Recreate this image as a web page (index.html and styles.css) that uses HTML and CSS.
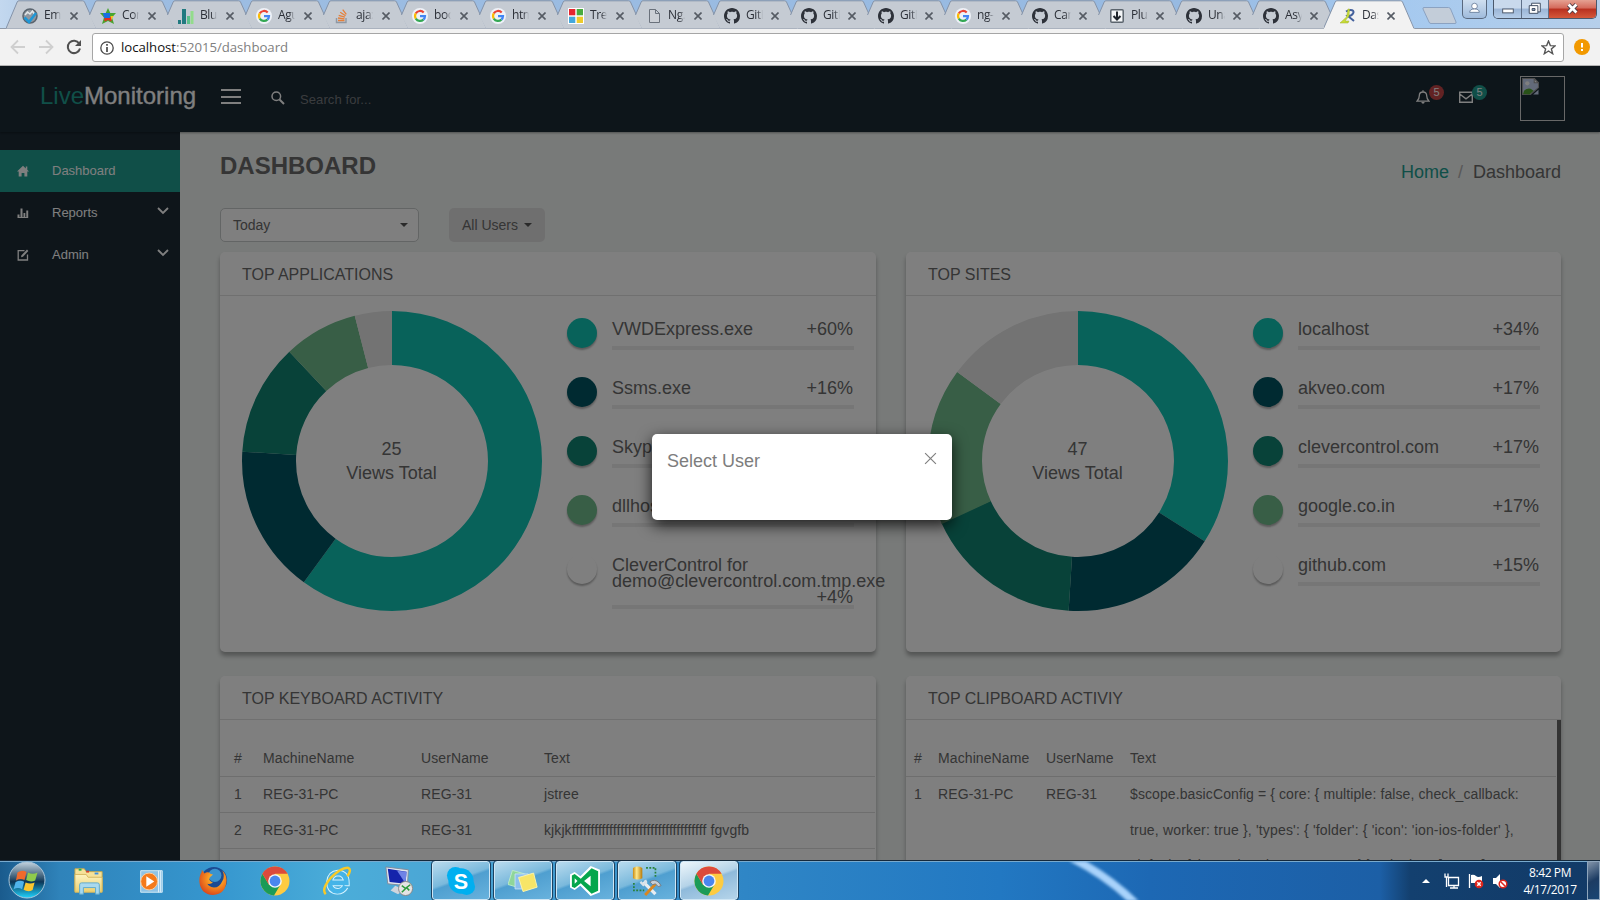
FILE: index.html
```html
<!DOCTYPE html>
<html lang="en">
<head>
<meta charset="utf-8">
<title>Dashboard</title>
<link rel="stylesheet" href="styles.css">
</head>
<body>
<svg class="defs" width="0" height="0">
  <defs>
    <linearGradient id="gOrb" x1="0" y1="0" x2="0" y2="1"><stop offset="0" stop-color="#c3d3df"/><stop offset=".45" stop-color="#31546f"/><stop offset=".55" stop-color="#0c3556"/><stop offset="1" stop-color="#1fd4ff"/></linearGradient>
    <linearGradient id="gFold" x1="0" y1="0" x2="0" y2="1"><stop offset="0" stop-color="#fdf3c0"/><stop offset="1" stop-color="#ecd06f"/></linearGradient>
    <radialGradient id="gFox" cx=".6" cy=".35" r=".7"><stop offset="0" stop-color="#ffd93a"/><stop offset=".5" stop-color="#f58a1f"/><stop offset="1" stop-color="#d8431b"/></radialGradient>
    <linearGradient id="gDb" x1="0" x2="1" y1="0" y2="0"><stop offset="0" stop-color="#c98a10"/><stop offset=".4" stop-color="#ffe88a"/><stop offset="1" stop-color="#b87a08"/></linearGradient>
    <symbol id="tab" viewBox="0 0 92 29"><path d="M5.5 15.500 11.200 2Q11.600.8 13 .8H76.500Q78 .8 78.500 2L90.500 28.500H12z" fill="#c5cbd3"/><path d="M5.500 15 11.200 2Q11.600.8 13 .8H76.500Q78 .8 78.500 2L90.500 28.500" fill="none" stroke="#8493a9"/></symbol>
    <symbol id="tab-first" viewBox="0 0 92 29"><path d="M0 28.500 11.200 2Q11.600.8 13 .8H76.500Q78 .8 78.500 2L90.500 28.500z" fill="#c5cbd3"/><path d="M0 28.500 11.200 2Q11.600.8 13 .8H76.500Q78 .8 78.500 2L90.500 28.500" fill="none" stroke="#8493a9"/></symbol>
    <symbol id="tab-on" viewBox="0 0 92 29"><path d="M-.5 29 11.200 2Q11.600.8 13 .8H76.500Q78 .8 78.500 2L90.500 29z" fill="#f2f2f2"/><path d="M-.5 28.500 11.200 2Q11.600.8 13 .8H76.500Q78 .8 78.500 2L90 28.500" fill="none" stroke="#8493a9"/></symbol>
    <symbol id="x" viewBox="0 0 8 8"><path d="M.5.5l7 7M7.500.5l-7 7" stroke="#555b64" stroke-width="1.600" fill="none"/></symbol>
    <symbol id="google" viewBox="0 0 16 16"><circle cx="8" cy="8" r="8" fill="#eef2f8"/><g fill="none" stroke-width="2.200"><path d="M3.800 5.400A5 5 0 0 1 11.700 4.500" stroke="#ea4335"/><path d="M3.800 5.400A5 5 0 0 0 3.800 10.600" stroke="#fbbc05"/><path d="M3.800 10.600A5 5 0 0 0 11.400 11.600" stroke="#34a853"/><path d="M8 8.100H13A5 5 0 0 1 11.400 11.600" stroke="#4285f4"/></g></symbol>
    <symbol id="github" viewBox="0 0 16 16"><path fill="#2d3139" d="M8 0C3.580 0 0 3.580 0 8c0 3.540 2.290 6.530 5.470 7.590.4.070.55-.17.55-.38 0-.19-.01-.82-.01-1.490-2.010.37-2.530-.49-2.690-.94-.09-.23-.48-.94-.82-1.130-.28-.15-.68-.52-.01-.53.63-.01 1.080.58 1.230.82.72 1.210 1.870.87 2.330.66.07-.52.28-.87.51-1.070-1.780-.2-3.640-.89-3.640-3.950 0-.87.31-1.590.82-2.150-.08-.2-.36-1.020.08-2.120 0 0 .67-.21 2.200.82.64-.18 1.320-.27 2-.27s1.360.09 2 .27c1.530-1.040 2.200-.82 2.200-.82.44 1.100.16 1.920.08 2.120.51.56.82 1.270.82 2.150 0 3.070-1.870 3.750-3.650 3.950.29.25.54.73.54 1.480 0 1.070-.01 1.930-.01 2.200 0 .21.15.46.55.38A8.010 8.010 0 0 0 16 8c0-4.420-3.580-8-8-8z"/></symbol>
    <symbol id="chrome" viewBox="0 0 30 30"><circle cx="15" cy="15" r="14.500" fill="#fdcb41"/><path d="M2.400 7.800A14.500 14.500 0 0 0 14 29.500L20.500 18.500 9 18.800z" fill="#1b9b57"/><path d="M2.400 7.800A14.500 14.500 0 0 1 27.600 7.800H15L8.800 18.400z" fill="#dc4a3c"/><circle cx="15" cy="15" r="6.800" fill="#f4f6f8"/><circle cx="15" cy="15" r="5.400" fill="#4a86ee"/></symbol>
    <symbol id="chev" viewBox="0 0 12 8"><path d="M1 1l5 5 5-5" fill="none" stroke="#fff" stroke-width="1.800"/></symbol>
  </defs>
</svg>

<div class="screen">
  <div class="titlebar">
    <div class="tabs">
      <div class="tab"><svg class="shape"><use href="#tab-first"/></svg><svg class="fav" viewBox="0 0 16 16"><circle cx="8" cy="8" r="7" fill="#8f969e" stroke="#59636d" stroke-width="1.500"/><path d="M3 7l2.500-3L8 6l2.500-3 2.500 4" fill="none" stroke="#e4e7e9" stroke-width="1.500"/><path d="M2.500 9.500l4.500 4.500 7-9" fill="none" stroke="#1f97d6" stroke-width="2.600"/></svg><span>Emp</span><svg class="close"><use href="#x"/></svg></div>
      <div class="tab"><svg class="shape"><use href="#tab"/></svg><svg class="fav" viewBox="0 0 16 16"><path d="M8 0l2.300 5H16l-4 4.500L14 16l-6-3-6 3 2-6.500L0 5h5.700z" fill="#48a52f"/><path d="M4.500 9h7v4.500L8 12l-3.500 1.500z" fill="#e62b1e"/><path d="M3 5h7v5H4z" fill="#1a6fe0"/><path d="M10.500 8h3l-2 4z" fill="#f9c21a"/></svg><span>Con</span><svg class="close"><use href="#x"/></svg></div>
      <div class="tab"><svg class="shape"><use href="#tab"/></svg><svg class="fav" viewBox="0 0 16 16"><path d="M0 12h3v4H0zM4 1h4v15H4z" fill="#217a80"/><path d="M9 8h3v8H9z" fill="#5cc08c"/><path d="M12.500 3h3v13h-3z" fill="#93dc8c"/></svg><span>Blur</span><svg class="close"><use href="#x"/></svg></div>
      <div class="tab"><svg class="shape"><use href="#tab"/></svg><svg class="fav"><use href="#google"/></svg><span>Agu</span><svg class="close"><use href="#x"/></svg></div>
      <div class="tab"><svg class="shape"><use href="#tab"/></svg><svg class="fav" viewBox="0 0 16 16"><path d="M2.500 10v4.500h9.500V10" fill="none" stroke="#8f98a3" stroke-width="1.400"/><path d="M4 12.500h6.500M4 10l6.500.8M4.700 7.300l6.200 1.900M6.200 4.300l5.400 3.400M8.700 1.700l3.600 4.700" stroke="#e5803a" stroke-width="1.300"/></svg><span>ajax</span><svg class="close"><use href="#x"/></svg></div>
      <div class="tab"><svg class="shape"><use href="#tab"/></svg><svg class="fav"><use href="#google"/></svg><span>boo</span><svg class="close"><use href="#x"/></svg></div>
      <div class="tab"><svg class="shape"><use href="#tab"/></svg><svg class="fav"><use href="#google"/></svg><span>htm</span><svg class="close"><use href="#x"/></svg></div>
      <div class="tab"><svg class="shape"><use href="#tab"/></svg><svg class="fav" viewBox="0 0 16 16"><path d="M0 0h16v16H0z" fill="#fff"/><path d="M1 1h6.300v6.300H1z" fill="#e5262f"/><path d="M8.700 1H15v6.300H8.700z" fill="#49ab3d"/><path d="M1 8.700h6.300V15H1z" fill="#44a8dc"/><path d="M8.700 8.700H15V15H8.700z" fill="#eecb2b"/></svg><span>Tree</span><svg class="close"><use href="#x"/></svg></div>
      <div class="tab"><svg class="shape"><use href="#tab"/></svg><svg class="fav" viewBox="0 0 16 16"><path d="M3.500 1.500h6l4 4v9h-10zM9.500 1.500v4h4" fill="#ccd0d6" stroke="#6a717b"/></svg><span>Ng.</span><svg class="close"><use href="#x"/></svg></div>
      <div class="tab n"><svg class="shape"><use href="#tab"/></svg><svg class="fav"><use href="#github"/></svg><span>GitH</span><svg class="close"><use href="#x"/></svg></div>
      <div class="tab n"><svg class="shape"><use href="#tab"/></svg><svg class="fav"><use href="#github"/></svg><span>GitH</span><svg class="close"><use href="#x"/></svg></div>
      <div class="tab n"><svg class="shape"><use href="#tab"/></svg><svg class="fav"><use href="#github"/></svg><span>GitH</span><svg class="close"><use href="#x"/></svg></div>
      <div class="tab n"><svg class="shape"><use href="#tab"/></svg><svg class="fav"><use href="#google"/></svg><span>ng-</span><svg class="close"><use href="#x"/></svg></div>
      <div class="tab n"><svg class="shape"><use href="#tab"/></svg><svg class="fav"><use href="#github"/></svg><span>Can</span><svg class="close"><use href="#x"/></svg></div>
      <div class="tab n"><svg class="shape"><use href="#tab"/></svg><svg class="fav" viewBox="0 0 16 16"><rect x="1.800" y="1.800" width="12.400" height="12.400" rx="1" fill="#f3f5f7" stroke="#5b646d" stroke-width="1.500"/><path d="M8 3.500v8M4.500 8 8 11.500 11.500 8" fill="none" stroke="#1e242b" stroke-width="2"/></svg><span>Plun</span><svg class="close"><use href="#x"/></svg></div>
      <div class="tab n"><svg class="shape"><use href="#tab"/></svg><svg class="fav"><use href="#github"/></svg><span>Una</span><svg class="close"><use href="#x"/></svg></div>
      <div class="tab n"><svg class="shape"><use href="#tab"/></svg><svg class="fav"><use href="#github"/></svg><span>Asy</span><svg class="close"><use href="#x"/></svg></div>
      <div class="tab n"><svg class="shape"><use href="#tab-on"/></svg><svg class="fav" viewBox="0 0 16 16"><path d="M6 3.500c5-3 9-1 7 2-1 2-3 2.500-5 2.500l6 5" fill="none" stroke="#44619c" stroke-width="2"/><path d="M8 1 6.500 9 0 15h8l1-2H5l4-5 .5-7z" fill="#c9dc38" stroke="#9fb32a" stroke-width=".5"/></svg><span>Das</span><svg class="close"><use href="#x"/></svg></div>
    </div>
    <svg class="newtab" viewBox="0 0 36 18"><path d="M2 .5H26.500Q28 .5 28.600 2L34 15Q34.500 16.500 33 16.500H9Q7.500 16.500 7 15L1 2Q.5.500 2 .5z" fill="#c3cdd9" stroke="#8ba2c1"/></svg>
    <div class="winbtns">
      <svg class="user" viewBox="0 0 24 18"><circle cx="12" cy="6" r="3" fill="#fff" stroke="#596f8e" stroke-width=".8"/><path d="M7 12.500q0-3.500 5-3.500t5 3.500z" fill="#fff" stroke="#596f8e" stroke-width=".8"/></svg>
      <div class="group">
        <svg class="min" viewBox="0 0 28 18"><rect x="9" y="9" width="11" height="4" fill="#fff" stroke="#4b5668"/></svg>
        <svg class="max" viewBox="0 0 27 18"><path d="M10 3h9v9h-9z" fill="#fff" stroke="#3e4c61"/><path d="M7.500 5.500h9v8h-9z" fill="#fff" stroke="#3e4c61"/><path d="M10.500 8.500h3v2h-3z" fill="#8fa4c3" stroke="#3e4c61"/></svg>
        <svg class="cls" viewBox="0 0 48 18"><path d="M20 4.500l8 8M28 4.500l-8 8" stroke="#4b3a44" stroke-width="4.500"/><path d="M20 4.500l8 8M28 4.500l-8 8" stroke="#fff" stroke-width="2.800"/></svg>
      </div>
    </div>
  </div>
  <div class="toolbar">
    <svg class="nav back" viewBox="0 0 16 16"><path d="M15 8H2M8 1.500 1.500 8 8 14.500" fill="none" stroke="#cfcfcf" stroke-width="1.800"/></svg>
    <svg class="nav" viewBox="0 0 16 16"><path d="M1 8h13M8 1.500 14.500 8 8 14.500" fill="none" stroke="#cfcfcf" stroke-width="1.800"/></svg>
    <svg class="nav reload" viewBox="0 0 16 16"><path d="M13.200 4.500A6.200 6.200 0 1 0 14 9.500" fill="none" stroke="#505050" stroke-width="2"/><path d="M15 1v6H9z" fill="#505050"/></svg>
    <div class="omni">
      <svg class="info" viewBox="0 0 14 14"><circle cx="7" cy="7" r="6.200" fill="none" stroke="#4a4a4a" stroke-width="1.300"/><path d="M7 3v1.700M7 6v5" stroke="#4a4a4a" stroke-width="1.700"/></svg>
      <div class="url"><b>localhost</b>:52015/dashboard</div>
      <svg class="star" viewBox="0 0 14 14"><path d="M7 1l1.700 4.200 4.500.3-3.500 2.900 1.200 4.400L7 10.300l-3.900 2.500 1.200-4.400L.8 5.500l4.500-.3z" fill="none" stroke="#555" stroke-width="1.300"/></svg>
    </div>
    <svg class="warn" viewBox="0 0 16 16"><circle cx="8" cy="8" r="8" fill="#f29900"/><path d="M8 4v4.500M8 10v2" stroke="#fff" stroke-width="2"/></svg>
  </div>

  <div class="page">
    <header class="top">
      <div class="logo"><span>Live</span>Monitoring</div>
      <div class="burger"><i></i><i></i><i></i></div>
      <svg class="search" viewBox="0 0 14 14"><circle cx="5.300" cy="5.300" r="4.300" fill="none" stroke="#fff" stroke-width="1.500"/><path d="M8.500 8.500l4.500 4.500" stroke="#fff" stroke-width="1.900"/></svg>
      <div class="ph">Search for...</div>
      <div class="alerts">
        <div class="alert"><svg viewBox="0 0 14 14"><path d="M1 11.200h12Q10.700 9 10.700 5.800 10.700 2 7 2T3.300 5.800Q3.300 9 1 11.200zM7 .3V2" fill="none" stroke="#fff" stroke-width="1.300"/><path d="M5.300 12h3.400Q8.400 13.700 7 13.700T5.300 12z" fill="#fff"/></svg><em class="red">5</em></div>
        <div class="alert"><svg viewBox="0 0 14 14"><path d="M.7 2.200h12.600v10H.7zM.7 4l6.300 4.800L13.300 4" fill="none" stroke="#fff" stroke-width="1.400"/></svg><em class="teal">5</em></div>
      </div>
      <div class="avatar"><svg viewBox="0 0 16 16"><path d="M.5.500h11l4 4V9L8 15.500H.5z" fill="#c6d5f2" stroke="#9a9a9a"/><path d="M1 15q1-6 7-5l3 2-4 3.500z" fill="#53a431"/><circle cx="5" cy="5" r="2" fill="#fff"/><path d="M11.500.5v4h4z" fill="#fff" stroke="#999"/><path d="M15.500 11v4.500h-5z" fill="#c6d5f2"/></svg></div>
    </header>
    <div class="body">
      <aside>
        <a class="on"><svg class="ico" viewBox="0 0 12 12"><path d="M6 .8 0 6.500h1.700V11.500H4.600V8h2.800v3.500h2.900V6.500H12L10.300 4.800V1.500H8.800v1.900z" fill="#fff"/></svg><span>Dashboard</span></a>
        <a><svg class="ico" viewBox="0 0 12 12"><path d="M.5 7.500h2v3h-2zM3.500 1.500h2v9h-2zM6.500 6h1.800v4.500H6.500zM9.300 3.500h1.900v7H9.300zM.5 10h10.700v1H.5z" fill="#fff"/></svg><span>Reports</span><svg class="chev"><use href="#chev"/></svg></a>
        <a><svg class="ico" viewBox="0 0 12 12"><path d="M7.500 1.700H1.200v9.300h9.300V5.500" fill="none" stroke="#fff" stroke-width="1.300"/><path d="M4 8.300l.5-2L10 .6l1.400 1.400L6 7.700z" fill="#fff"/></svg><span>Admin</span><svg class="chev"><use href="#chev"/></svg></a>
      </aside>
      <main>
        <div class="headrow"><h1>DASHBOARD</h1><div class="crumb"><a>Home</a><i>/</i><span>Dashboard</span></div></div>
        <div class="filters"><div class="select">Today<b class="caret"></b></div><div class="btn">All Users<b class="caret"></b></div></div>
        <div class="cards">
          <section class="card tall">
            <h2>TOP APPLICATIONS</h2>
            <div class="chart">
              <div class="donut">
                <svg viewBox="0 0 300 300"><g fill="none" stroke-width="54" transform="rotate(-90 150 150)">
                  <circle cx="150" cy="150" r="123" pathLength="100" stroke="#10c4b5" stroke-dasharray="60 40"/>
                  <circle cx="150" cy="150" r="123" pathLength="100" stroke="#005562" stroke-dasharray="16 84" stroke-dashoffset="-60"/>
                  <circle cx="150" cy="150" r="123" pathLength="100" stroke="#108473" stroke-dasharray="12 88" stroke-dashoffset="-76"/>
                  <circle cx="150" cy="150" r="123" pathLength="100" stroke="#70bc8c" stroke-dasharray="8 92" stroke-dashoffset="-88"/>
                  <circle cx="150" cy="150" r="123" pathLength="100" stroke="#e6e6e6" stroke-dasharray="4 96" stroke-dashoffset="-96"/>
                </g></svg>
                <div class="total">25<br>Views Total</div>
              </div>
              <ul>
                <li><i class="c1"></i><div><p><span>VWDExpress.exe</span><b>+60%</b></p></div></li>
                <li><i class="c2"></i><div><p><span>Ssms.exe</span><b>+16%</b></p></div></li>
                <li><i class="c3"></i><div><p><span>Skype.exe</span><b>+12%</b></p></div></li>
                <li><i class="c4"></i><div><p><span>dllhost.exe</span><b>+8%</b></p></div></li>
                <li><i class="c5"></i><div><p><span class="long">CleverControl for demo@clevercontrol.com.tmp.exe</span><b>+4%</b></p></div></li>
              </ul>
            </div>
          </section>
          <section class="card tall">
            <h2>TOP SITES</h2>
            <div class="chart">
              <div class="donut">
                <svg viewBox="0 0 300 300"><g fill="none" stroke-width="54" transform="rotate(-90 150 150)">
                  <circle cx="150" cy="150" r="123" pathLength="100" stroke="#10c4b5" stroke-dasharray="34 66"/>
                  <circle cx="150" cy="150" r="123" pathLength="100" stroke="#005562" stroke-dasharray="17 83" stroke-dashoffset="-34"/>
                  <circle cx="150" cy="150" r="123" pathLength="100" stroke="#108473" stroke-dasharray="17.200 82.800" stroke-dashoffset="-51"/>
                  <circle cx="150" cy="150" r="123" pathLength="100" stroke="#70bc8c" stroke-dasharray="17 83" stroke-dashoffset="-68.100"/>
                  <circle cx="150" cy="150" r="123" pathLength="100" stroke="#e6e6e6" stroke-dasharray="14.900 85.100" stroke-dashoffset="-85.100"/>
                </g></svg>
                <div class="total">47<br>Views Total</div>
              </div>
              <ul>
                <li><i class="c1"></i><div><p><span>localhost</span><b>+34%</b></p></div></li>
                <li><i class="c2"></i><div><p><span>akveo.com</span><b>+17%</b></p></div></li>
                <li><i class="c3"></i><div><p><span>clevercontrol.com</span><b>+17%</b></p></div></li>
                <li><i class="c4"></i><div><p><span>google.co.in</span><b>+17%</b></p></div></li>
                <li><i class="c5"></i><div><p><span>github.com</span><b>+15%</b></p></div></li>
              </ul>
            </div>
          </section>
          <section class="card">
            <h2>TOP KEYBOARD ACTIVITY</h2>
            <div class="grid keys">
              <div class="row hd"><span>#</span><span>MachineName</span><span>UserName</span><span>Text</span></div>
              <div class="row"><span>1</span><span>REG-31-PC</span><span>REG-31</span><span>jstree</span></div>
              <div class="row"><span>2</span><span>REG-31-PC</span><span>REG-31</span><span>kjkjkffffffffffffffffffffffffffffffffffff fgvgfb</span></div>
            </div>
          </section>
          <section class="card">
            <h2>TOP CLIPBOARD ACTIVIY</h2>
            <div class="grid clips">
              <div class="row hd"><span>#</span><span>MachineName</span><span>UserName</span><span>Text</span></div>
              <div class="row last"><span>1</span><span>REG-31-PC</span><span>REG-31</span><span class="code">$scope.basicConfig = { core: { multiple: false, check_callback:<br><span class="wide">true, worker: true }, 'types': { 'folder': { 'icon': 'ion-ios-folder' },</span><br>'default': { 'icon': 'ion-document-text' } }, 'plugins': ['types'],</span></div>
            </div>
          </section>
        </div>
      </main>
    </div>
    <div class="overlay"></div>
    <div class="modal"><span>Select User</span><svg viewBox="0 0 12 12"><path d="M1 1l10 10M11 1 1 11" stroke="#808080" stroke-width="1.100"/></svg></div>
  </div>

  <div class="taskbar">
    <svg class="beam" viewBox="0 0 100 40"><path d="M5 -4Q45 16 74 46" fill="none" stroke="#a9d3fb" stroke-width="8"/></svg>
    <svg class="orb" viewBox="0 0 38 38"><circle cx="19" cy="19" r="18" fill="url(#gOrb)" stroke="#a8c4d8"/><path d="M9.500 11.500q4.500-3 9-.5l-2 8q-4.500-2-8.500.5z" fill="#ef6a2c"/><path d="M20 11.500q4.500 2.500 9.500 0l-2.300 8q-4.500 2-9-.5z" fill="#8fcb4c"/><path d="M7.600 21q4.500-2.500 8.500-.3l-2 7.500q-4-2.300-8.500 0z" fill="#4fb4ec"/><path d="M17.600 21.500q4.500 2 9 0l-2 7.500q-4.500 2.500-9-.3z" fill="#fbc62e"/></svg>
    <div class="apps">
      <div class="app"><svg viewBox="0 0 32 32"><path d="M1 7V3h10l2 3h17v21H1z" fill="#f6e29a" stroke="#c9a94a"/><path d="M5 3h3v2H5z" fill="#26b34a"/><path d="M13 5h3v2h-3z" fill="#d8402b"/><path d="M22 7h4v2h-4z" fill="#3a8ee0"/><path d="M1 9h12l2 3h15v16H1z" fill="url(#gFold)" stroke="#d3b65d"/><path d="M6 30V20q0-2 2-2h17q2 0 2 2v10h-4v-7H10v7z" fill="#a9d9ee" stroke="#5ba9cf"/></svg></div>
      <div class="app"><svg viewBox="0 0 32 32"><path d="M5 5h23v23H5z" fill="#8fc3e6" stroke="#d8edf8"/><path d="M24 5v23M26 5v23" stroke="#e3f2fb"/><circle cx="14" cy="16.500" r="9" fill="#f47a1c" stroke="#ffd0a0"/><path d="M11 11v11l8.500-5.500z" fill="#fff"/></svg></div>
      <div class="app"><svg viewBox="0 0 32 32"><circle cx="17" cy="15" r="14" fill="#1c4b92"/><circle cx="18" cy="10" r="7" fill="#3a93cf"/><path d="M4 6Q1 11 1.500 17 3 30 16 31 30 30 30.500 15 30 8 26 5q3 6 0 11-3 7-9 7-6-1-7-4 4 1 6-2-3 0-4-3 0-2 2-3l2-2q-3 0-4-2-3-1-5 1-1-2-3-4z" fill="url(#gFox)"/></svg></div>
      <div class="app"><svg viewBox="0 0 30 30"><use href="#chrome"/></svg></div>
      <div class="app"><svg viewBox="0 0 32 32"><path d="M25 22Q22 27 16.500 27 8 26.500 8 17 9 8 17 7.500 26 8 26 18H9" fill="none" stroke="#d7f3ff" stroke-width="7"/><path d="M25 21.500Q22 27 16.500 27 8 26.500 8 17 9 8 17 7.500 26 8 26 18H9" fill="none" stroke="#45b4e8" stroke-width="5"/><path d="M4 30Q-1 25 9 13 21 1 28 2q4 2-1 9" fill="none" stroke="#f8c927" stroke-width="2.600"/></svg></div>
      <div class="app"><svg viewBox="0 0 32 32"><path d="M2 1l24 3-1 17L4 19z" fill="#dfe5ee" stroke="#7f8b9c"/><path d="M4 3l20 3-1 13L6 17z" fill="#1423ab"/><path d="M14 5l10 1-1 13z" fill="#6f83e6"/><path d="M12 21l-5 5 8 4 6-5z" fill="#cfd5dd"/><circle cx="23" cy="24" r="7.500" fill="#e4e4e4" stroke="#858585"/><path d="M19 21l4 3-4 4M28 20l-4 3 3 3" fill="none" stroke="#2c9b3c" stroke-width="1.600"/></svg></div>
      <div class="app run"><svg viewBox="0 0 32 32"><rect x="1" y="1" width="18" height="18" rx="9" fill="#00aff0"/><rect x="13" y="13" width="18" height="18" rx="9" fill="#00aff0"/><circle cx="16" cy="16" r="13.500" fill="#00aff0"/><text x="16" y="24" text-anchor="middle" class="sk">S</text></svg></div>
      <div class="app run"><svg viewBox="0 0 34 32"><path d="M5 4l14 4-5 16-14-4z" fill="#8fd69a" stroke="#c2efc6"/><path d="M8 8h15v17H8z" fill="#8cc0ee" stroke="#c7e1f7"/><path d="M12 12l17-5 4 16-16 5z" fill="#f7e568" stroke="#fff6ae"/></svg></div>
      <div class="app run"><svg viewBox="0 0 32 32"><path d="M0 9l5-2.500 6 4.500L22 0l10 4v24l-10 4-11-11-6 4.500L0 23z" fill="#fff"/><path d="M2 10l3-1.500 6.500 5L23 2.500l7 3v21l-7 3-11.500-11-6.500 5L2 22zM5 13v6l3-3zM22 10.500 15 16l7 5.500z" fill="#05a64c" fill-rule="evenodd"/></svg></div>
      <div class="app run"><svg viewBox="0 0 32 32"><path d="M1 2q5-3 10 0v11q-5 3-10 0z" fill="url(#gDb)"/><path d="M15 2h10v10M2 18v8h11" fill="none" stroke="#29813a" stroke-width="1.800" stroke-dasharray="2 1.500"/><path d="M12 17l13 13" stroke="#e8edf2" stroke-width="3.500"/><path d="M27 17 14 31" stroke="#d98720" stroke-width="3"/><path d="M19 17q5-4 10 1l2 3-3 1-3-3-3 1z" fill="#c5ced6" stroke="#707a83"/><path d="M9 17l3 3 3-3-1-2" fill="none" stroke="#dbe2e9" stroke-width="2.500"/></svg></div>
      <div class="app run act"><svg viewBox="0 0 30 30"><use href="#chrome"/></svg></div>
    </div>
    <div class="tray">
      <svg class="up" viewBox="0 0 8 4"><path d="M0 4 4 0l4 4z" fill="#fff"/></svg>
      <svg class="ti" viewBox="0 0 16 16"><path d="M4.500 4.500h10v8h-10zM6 15h8M10 12.500V15M1 .5v3.500h3V.5M2.500 4v10" fill="none" stroke="#fff" stroke-width="1.300"/></svg>
      <svg class="ti" viewBox="0 0 16 16"><path d="M1.500 1v14" stroke="#fff" stroke-width="1.300"/><path d="M3 2q3-1 5 1t6 0v7H3z" fill="#fff"/><circle cx="11" cy="11" r="4.300" fill="#e0251b"/><path d="M9.300 9.300l3.400 3.400M12.700 9.300l-3.400 3.400" stroke="#fff" stroke-width="1.500"/></svg>
      <svg class="ti" viewBox="0 0 16 16"><path d="M1 5h3l4-4v14l-4-4H1z" fill="#fff"/><circle cx="11" cy="11" r="3.800" fill="#fff" stroke="#e0251b" stroke-width="1.500"/><path d="M8.500 8.500l5 5" stroke="#e0251b" stroke-width="1.500"/></svg>
      <div class="clock">8:42 PM<br>4/17/2017</div>
      <div class="peek"></div>
    </div>
  </div>
</div>
</body>
</html>
```
FILE: styles.css
```css
* { box-sizing: border-box; margin: 0; padding: 0; }
body { width: 1600px; height: 900px; overflow: hidden; font-family: "Liberation Sans", Arial, sans-serif; }
svg { display: block; flex: none; }
.defs { position: absolute; }
.screen { width: 1600px; height: 900px; display: flex; flex-direction: column; overflow: hidden; }

/* Browser window */
.titlebar { height: 29px; flex: none; display: flex; align-items: flex-start; background: linear-gradient(90deg, #c3d8ef 0, #9dbde2 90px, #97bae2 1180px, #a5c9ef 1400px, #b6cfea 1600px); border-bottom: 1px solid #8f99a8; }
.tabs { display: flex; padding-left: 6px; }
.tab { position: relative; width: 78px; height: 29px; display: flex; align-items: center; padding: 0 0 0 16px; }
.tab.n { width: 77px; }
.shape { position: absolute; left: 0; top: 0; width: 92px; height: 29px; overflow: visible; }
.shape use { width: 92px; height: 29px; }
.fav { width: 16px; height: 16px; position: relative; top: 1px; }
.tab span { position: relative; margin-left: 6px; width: 17px; overflow: hidden; white-space: nowrap; font: 12px/18px "Open Sans", "Noto Sans", sans-serif; letter-spacing: -.4px; color: #2c3038; -webkit-mask-image: linear-gradient(90deg, #000 65%, transparent); mask-image: linear-gradient(90deg, #000 65%, transparent); }
.close { position: relative; top: 1px; width: 8px; height: 8px; margin-left: 9px; }
.tab.n .close { margin-left: 8px; }
.newtab { width: 36px; height: 18px; margin: 7px 0 0 21px; }
.winbtns { margin-left: auto; display: flex; padding-right: 3px; gap: 6px; }
.user { width: 25px; height: 19px; border: 1px solid #59697f; border-top: 0; border-radius: 0 0 5px 5px; background: linear-gradient(#cfdff0, #9fbbdc); }
.group { display: flex; border: 1px solid #4b586b; border-top: 0; border-radius: 0 0 5px 5px; overflow: hidden; }
.group svg { height: 18px; }
.min { width: 28px; background: linear-gradient(#c9d9ec 45%, #9bb5d6 50%, #b5cde8); border-right: 1px solid #5f7088; }
.max { width: 27px; background: linear-gradient(#c9d9ec 45%, #9bb5d6 50%, #b5cde8); border-right: 1px solid #5f7088; }
.cls { width: 47px; background: linear-gradient(#e5a192 0, #d4695a 45%, #b8301f 50%, #d5583a); }

.toolbar { height: 37px; flex: none; background: #f2f2f2; border-bottom: 1px solid #b3b3b3; display: flex; align-items: center; padding: 0 10px 0 10px; }
.nav { width: 16px; height: 16px; margin-right: 12px; }
.reload { margin-right: 10px; }
.omni { width: 1472px; height: 29px; margin-top: 1px; background: #fff; border: 1px solid #a6a6a6; border-radius: 3px; display: flex; align-items: center; padding: 0 7px; }
.info { width: 14px; height: 14px; }
.url { margin: -2px 0 0 7px; font: 13.200px/20px "Open Sans", "Noto Sans", sans-serif; letter-spacing: -.03px; color: #808080; }
.url b { font-weight: 400; color: #111; }
.star { width: 15px; height: 15px; margin-left: auto; }
.warn { width: 16px; height: 16px; margin-left: 10px; }

/* Page */
.page { position: relative; height: 794px; flex: none; overflow: hidden; background: #f0f4f2; }
.top { position: relative; height: 66px; background: #1b2a35; display: flex; padding-left: 40px; color: #fff; box-shadow: 0 1px 2px rgba(0,0,0,.35); }
.logo { width: 181px; font-size: 24px; line-height: 60px; white-space: nowrap; -webkit-text-stroke: .3px #fff; }
.logo span { color: #209e91; -webkit-text-stroke: 0; }
.burger { width: 20px; height: 15px; margin-top: 23px; display: flex; flex-direction: column; justify-content: space-between; }
.burger i { height: 2px; background: #fff; }
.search { width: 14px; height: 14px; margin: 25px 0 0 30px; }
.ph { font-size: 13px; letter-spacing: .1px; line-height: 20px; margin: 24px 0 0 15px; color: #75797d; }
.alerts { margin-left: auto; display: flex; gap: 29px; padding: 24px 0 0; }
.alert { position: relative; width: 14px; }
.alert svg { width: 14px; height: 14px; }
.alert em { position: absolute; left: 13px; top: -5px; width: 15px; height: 15px; border-radius: 50%; font: 11px/15px "Liberation Sans", sans-serif; text-align: center; }
.red { background: #c44546; }
.teal { background: #209e91; }
.avatar { width: 45px; height: 45px; margin: 10px 35px 0 47px; border: 1px solid #d0d0d0; padding: 1px; }
.avatar svg { width: 17px; height: 17px; }

.body { display: flex; height: 728px; }
aside { width: 180px; flex: none; background: #1c2a35; padding-top: 18px; }
aside a { height: 42px; display: flex; align-items: center; color: #fff; font-size: 13px; padding: 0 11px 0 17px; }
aside a.on { background: #209e91; }
aside span { margin: -2px 0 0 23px; }
.ico { width: 12px; height: 12px; margin-top: -1px; }
.chev { width: 12px; height: 8px; margin: -4px 0 0 auto; }

main { flex: 1; padding: 0 39px 0 40px; color: #6a6a6a; }
.headrow { display: flex; justify-content: space-between; height: 76px; }
h1 { font-size: 24px; line-height: 28px; margin-top: 20px; }
.crumb { font-size: 18px; line-height: 20px; margin-top: 30px; display: flex; }
.crumb a { color: #209e91; }
.crumb i { font-style: normal; color: #b0b0b0; margin: 0 10px 0 9px; }
.filters { display: flex; gap: 30px; height: 34px; margin-bottom: 10px; font-size: 14px; line-height: 32px; }
.select { width: 199px; border: 1px solid #c6caca; border-radius: 5px; background: #fff; padding: 0 10px 0 12px; display: flex; align-items: center; justify-content: space-between; }
.btn { width: 96px; border-radius: 5px; background: #dfdfdf; display: flex; align-items: center; padding-left: 13px; gap: 6px; }
.caret { border: 4px solid transparent; border-top-color: #555; border-bottom: 0; }

.cards { display: grid; grid-template-columns: 656px 655px; gap: 24px 30px; }
.card { background: #fff; border-radius: 5px; box-shadow: 0 4px 4px rgba(0,0,0,.3); height: 190px; min-width: 0; }
.card.tall { height: 400px; }
h2 { height: 44px; padding-left: 22px; font-size: 16px; font-weight: 400; line-height: 45px; border-bottom: 1px solid #e0e0e0; }
.chart { display: flex; padding: 15px 22px; }
.donut { position: relative; width: 300px; height: 300px; flex: none; }
.donut svg { width: 300px; height: 300px; }
.total { position: absolute; left: 0; right: 1px; top: 126px; text-align: center; font-size: 18px; line-height: 24px; }
ul { list-style: none; margin: 7px 0 0 25px; width: 287px; }
li { display: flex; gap: 15px; height: 29px; margin-bottom: 30px; }
li i { width: 30px; height: 30px; border-radius: 50%; flex: none; box-shadow: 0 2px 2px rgba(0,0,0,.3); }
li div { width: 242px; padding-top: 3px; }
li p { min-height: 25px; display: flex; flex-wrap: wrap; align-content: flex-start; font-size: 18px; line-height: 16px; }
li div::after { content: ""; display: block; height: 4px; background: #ececec; }
li b { font-weight: 400; margin: 0 1px 0 auto; }
.long { width: 242px; }
.c1 { background: #10c4b5; }
.c2 { background: #005562; }
.c3 { background: #108473; }
.c4 { background: #70bc8c; }
.c5 { background: #fff; }

.grid { padding-top: 22px; font-size: 14px; letter-spacing: .1px; }
.row { display: grid; height: 36px; line-height: 35px; border-bottom: 1px solid #dcdcdc; white-space: nowrap; }
.row.hd { height: 35px; line-height: 33px; }
.keys .row { grid-template-columns: 29px 158px 123px 1fr; padding-left: 14px; margin-right: 1px; }
.clips { border-right: 4px solid #666; height: 146px; overflow: hidden; }
.clips .row { grid-template-columns: 24px 108px 84px 1fr; padding-left: 8px; margin-right: 1px; }
.row.last { height: auto; }
.code { line-height: 35.500px; }
.wide { letter-spacing: .17px; }

.overlay { position: absolute; inset: 0; background: rgba(0,0,0,.5); }
.modal { position: absolute; left: 652px; top: 368px; width: 300px; height: 86px; background: #fff; border-radius: 5px; box-shadow: 0 5px 15px rgba(0,0,0,.8); display: flex; justify-content: space-between; padding: 16px 15px; font-size: 18px; line-height: 22px; color: #7d7d7d; }
.modal svg { width: 13px; height: 13px; margin-top: 2px; }

/* Windows taskbar */
.taskbar { position: relative; height: 40px; flex: none; display: flex; overflow: hidden; border-top: 1px solid #15293c; background: linear-gradient(90deg, #1a5b8d 0, #2f83ba 60px, #3697cf 220px, #4badd9 340px, #4ba6d5 440px, #2f86c6 745px, #2278c2 1000px, #1d68b4 1150px, #1c5fa6 1380px, #13406f 1410px, #123a67 1600px); box-shadow: inset 0 1px 0 #78aace; }
.beam { position: absolute; left: 1065px; top: 0; width: 100px; height: 40px; filter: blur(1.500px); }
.orb { width: 38px; height: 38px; margin: 0 0 0 8px; }
.apps { display: flex; margin-left: 13px; }
.app { width: 60px; height: 39px; margin-right: 2px; display: flex; align-items: center; justify-content: center; }
.app svg { width: 30px; height: 30px; }
.run { border: 1px solid #cfe6f5; outline: 1px solid #1b4262; outline-offset: 0; border-radius: 3px; background: linear-gradient(160deg, #b9dbee 0, #7ab9dc 45%, #4f9fd0 50%, #68b2dd); width: 58px; margin: 0 3px 0 1px; }
.act { background: linear-gradient(160deg, #edf6fb 0, #b5d3e8 45%, #8fbadb 50%, #b6d5ea); }
.sk { font: bold 23px "Liberation Sans", sans-serif; fill: #fff; }
.tray { margin-left: auto; display: flex; align-items: center; color: #fff; }
.up { width: 8px; height: 4px; margin-right: 14px; }
.ti { width: 16px; height: 16px; margin-right: 8px; }
.clock { width: 72px; text-align: center; font: 12px/17px "Open Sans", "Noto Sans", sans-serif; letter-spacing: -.4px; margin: 0 1px 0 -2px; }
.peek { width: 13px; height: 39px; border: 1px solid #8fa6bd; background: linear-gradient(150deg, #8294aa, #1c3c63 50%, #194674); }
```
